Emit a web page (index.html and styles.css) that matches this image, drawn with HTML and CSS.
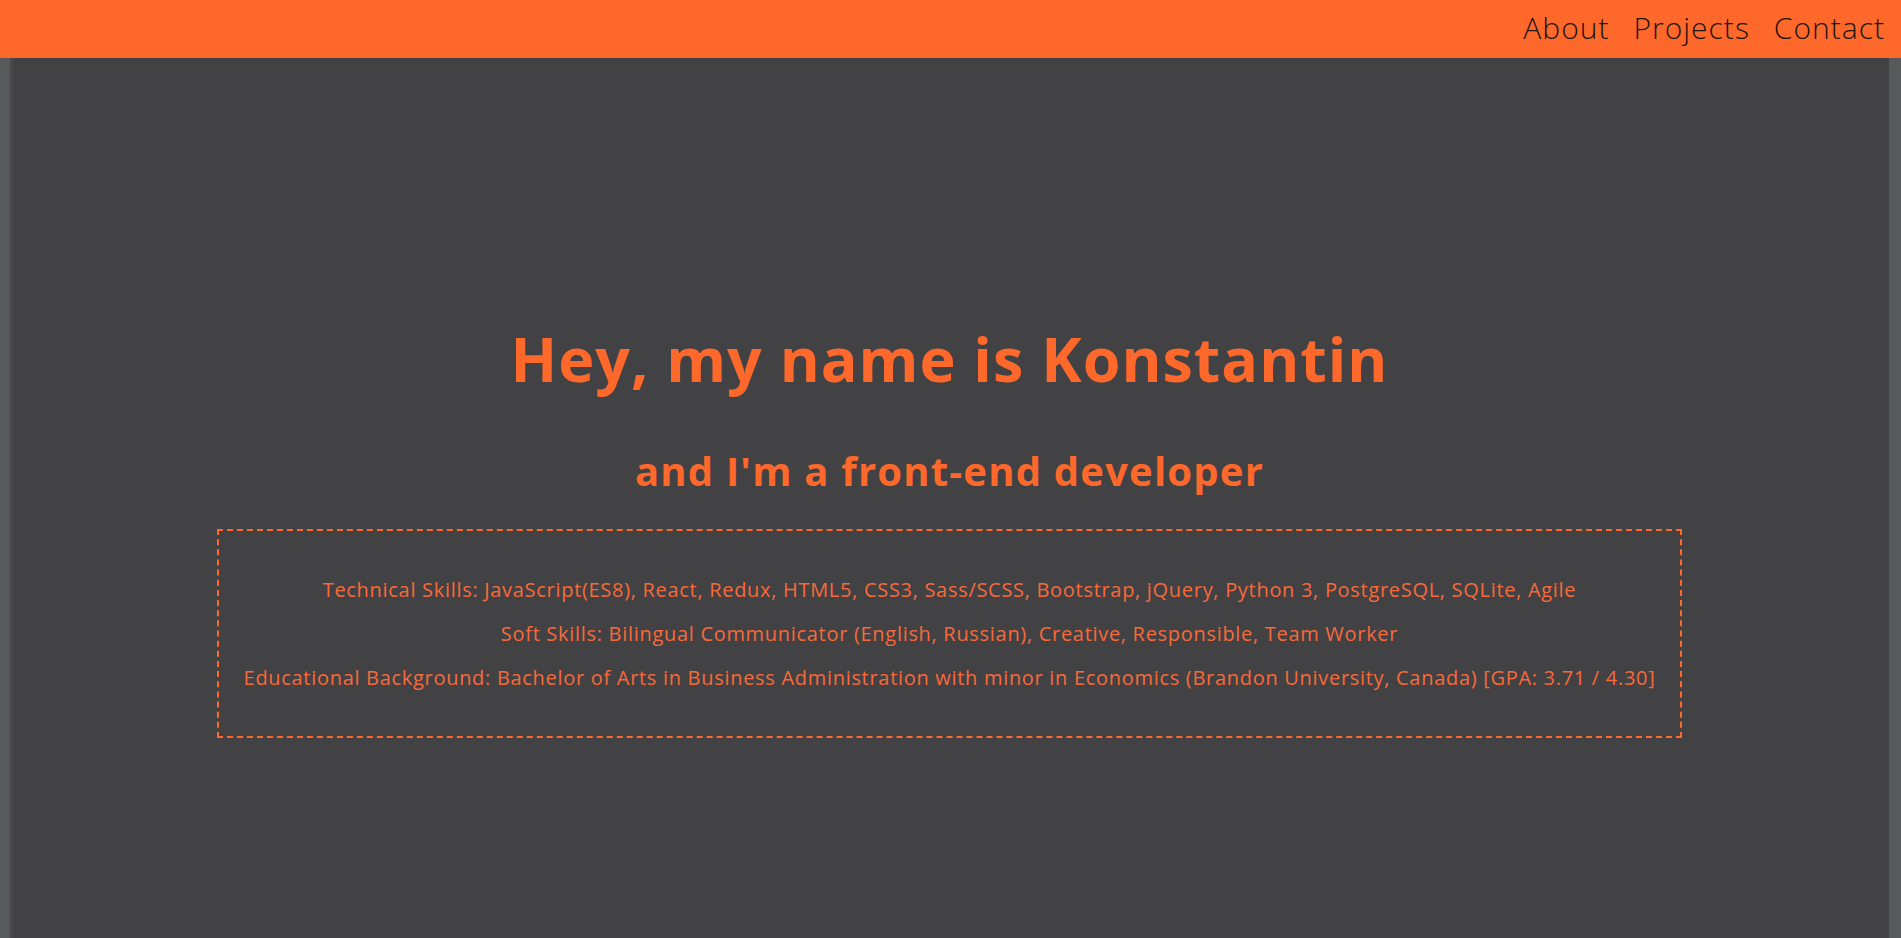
FILE: index.html
```html
<!DOCTYPE html>
<html lang="en">
<head>
<meta charset="utf-8">
<title>Konstantin</title>
<link rel="stylesheet" href="styles.css">
</head>
<body>
<header class="topbar">
  <nav class="nav-links">
    <a class="nav-link" href="#about">About</a>
    <a class="nav-link" href="#projects">Projects</a>
    <a class="nav-link" href="#contact">Contact</a>
  </nav>
</header>
<main class="hero">
  <div class="intro">
    <h1 class="title">Hey, my name is Konstantin</h1>
    <h2 class="subtitle">and I'm a front-end developer</h2>
    <div class="skills">
      <p class="skill-line">Technical Skills: JavaScript(ES8), React, Redux, HTML5, CSS3, Sass/SCSS, Bootstrap, jQuery, Python 3, PostgreSQL, SQLite, Agile</p>
      <p class="skill-line">Soft Skills: Bilingual Communicator (English, Russian), Creative, Responsible, Team Worker</p>
      <p class="skill-line">Educational Background: Bachelor of Arts in Business Administration with minor in Economics (Brandon University, Canada) [GPA: 3.71 / 4.30]</p>
    </div>
  </div>
</main>
</body>
</html>
```

FILE: styles.css
```css
html, body {
  margin: 0;
  padding: 0;
  height: 100%;
}

body {
  background: #58595b;
  font-family: "Open Sans", "Liberation Sans", sans-serif;
  display: flex;
  flex-direction: column;
  overflow: hidden;
}

.topbar {
  height: 58px;
  background: #ff682b;
  display: flex;
  justify-content: flex-end;
  align-items: flex-start;
  padding-right: 16px;
  flex: none;
}

.nav-links {
  display: flex;
  gap: 24px;
}

.nav-link {
  font-size: 30px;
  font-weight: 300;
  line-height: 55px;
  letter-spacing: 1px;
  color: #1e1510;
  text-decoration: none;
}

.hero {
  flex: 1;
  margin: 0 12px 0 10px;
  box-shadow: inset 3px 0 0 #49494b;
  background: #424244;
  padding-top: 261px;
}

.intro {
  display: flex;
  flex-direction: column;
  align-items: center;
  text-align: center;
}

.title {
  margin: 0;
  font-size: 61px;
  line-height: 80px;
  font-weight: 700;
  letter-spacing: 1px;
  color: #ff682b;
}

.subtitle {
  margin: 47px 0 0;
  font-size: 40px;
  line-height: 50px;
  font-weight: 700;
  letter-spacing: 1.2px;
  color: #ff682b;
}

.skills {
  margin-top: 33px;
  width: 78%;
  border: 2px dashed #ff682b;
  padding: 37px 0 36px;
  box-sizing: border-box;
}

.skill-line {
  margin: 0;
  font-size: 20px;
  line-height: 44px;
  letter-spacing: 0.7px;
  color: #f8693a;
}
```
